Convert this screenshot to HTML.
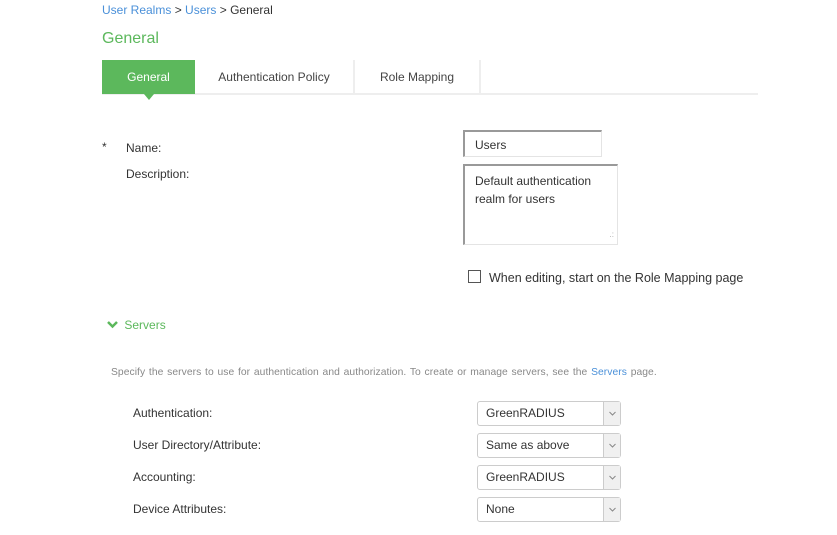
<!DOCTYPE html>
<html><head><style>
*{margin:0;padding:0;box-sizing:border-box}
body{width:837px;height:535px;background:#fff;font-family:"Liberation Sans",sans-serif;position:relative;overflow:hidden;color:#333}
.a{position:absolute;white-space:nowrap}
.bc{left:102px;top:3px;font-size:12px;color:#333}
.bc span{color:#4a90d9}
h1{position:absolute;left:102px;top:30px;font-size:16px;font-weight:normal;color:#5cb85c}
.tabs{position:absolute;left:102px;top:60px;width:656px;height:35px;border-bottom:2px solid #eee}
.tab{position:absolute;top:0;height:34px;line-height:34px;text-align:center;font-size:12px;color:#444;border-right:2px solid #eee}
.tab.on{background:#5cb85c;color:#fff;border:none}
.tab.on:after{content:"";position:absolute;left:42px;bottom:-6px;border-left:5px solid transparent;border-right:5px solid transparent;border-top:6px solid #5cb85c}
.lbl{font-size:12px;color:#333}
.inp{position:absolute;border:1px solid #e4e4e4;border-top:2px solid #999;border-left:2px solid #999;font-size:12px;padding:6px 10px;line-height:18px;color:#333}
.sel{position:absolute;left:477px;width:144px;height:25px;border:1px solid #ccc;border-radius:3px;font-size:12px;line-height:23px;padding-left:8px}
.sel i{position:absolute;right:0;top:0;width:17px;height:23px;border-left:1px solid #ccc;background:#f0f0f0}
.sel i svg{position:absolute;left:5px;top:9px}
</style></head><body>
<div class="a bc"><span>User Realms</span> &gt; <span>Users</span> &gt; General</div>
<h1>General</h1>
<div class="tabs">
<div class="tab on" style="left:0;width:93px">General</div>
<div class="tab" style="left:93px;width:160px">Authentication Policy</div>
<div class="tab" style="left:253px;width:126px">Role Mapping</div>
</div>
<div class="a lbl" style="left:102px;top:140px">*</div>
<div class="a lbl" style="left:126px;top:141px">Name:</div>
<div class="a lbl" style="left:126px;top:167px">Description:</div>
<div class="inp" style="left:463px;top:130px;width:139px;height:27px;padding-top:4px">Users</div>
<div class="inp" style="left:463px;top:164px;width:155px;height:81px;padding-top:6px">Default authentication<br>realm for users<span style="position:absolute;right:3px;bottom:0;font-size:8px;color:#aaa">.:</span></div>
<div class="a" style="left:468px;top:270px;width:13px;height:13px;border:1px solid #555"></div>
<div class="a lbl" style="left:489px;top:271px;font-size:12.5px">When editing, start on the Role Mapping page</div>
<div class="a" style="left:107px;top:318px;font-size:12px;color:#5cb85c;font-weight:bold">
<svg width="11" height="9" viewBox="0 0 11 9" style="vertical-align:0"><path d="M1 2L5.5 6.5L10 2" stroke="#5cb85c" stroke-width="2.5" fill="none"/></svg>
<span style="font-weight:normal;margin-left:3px">Servers</span></div>
<div class="a" style="left:111px;top:367px;font-size:10.3px;letter-spacing:0.06px;word-spacing:0.8px;color:#888">Specify the servers to use for authentication and authorization. To create or manage servers, see the <span style="color:#4a90d9">Servers</span> page.</div>
<div class="a lbl" style="left:133px;top:406px">Authentication:</div>
<div class="a lbl" style="left:133px;top:438px">User Directory/Attribute:</div>
<div class="a lbl" style="left:133px;top:470px">Accounting:</div>
<div class="a lbl" style="left:133px;top:502px">Device Attributes:</div>
<div class="sel" style="top:401px">GreenRADIUS<i><svg width="7" height="5"><path d="M0.5 1L3.5 4L6.5 1" stroke="#888" fill="none"/></svg></i></div>
<div class="sel" style="top:433px">Same as above<i><svg width="7" height="5"><path d="M0.5 1L3.5 4L6.5 1" stroke="#888" fill="none"/></svg></i></div>
<div class="sel" style="top:465px">GreenRADIUS<i><svg width="7" height="5"><path d="M0.5 1L3.5 4L6.5 1" stroke="#888" fill="none"/></svg></i></div>
<div class="sel" style="top:497px">None<i><svg width="7" height="5"><path d="M0.5 1L3.5 4L6.5 1" stroke="#888" fill="none"/></svg></i></div>
</body></html>
